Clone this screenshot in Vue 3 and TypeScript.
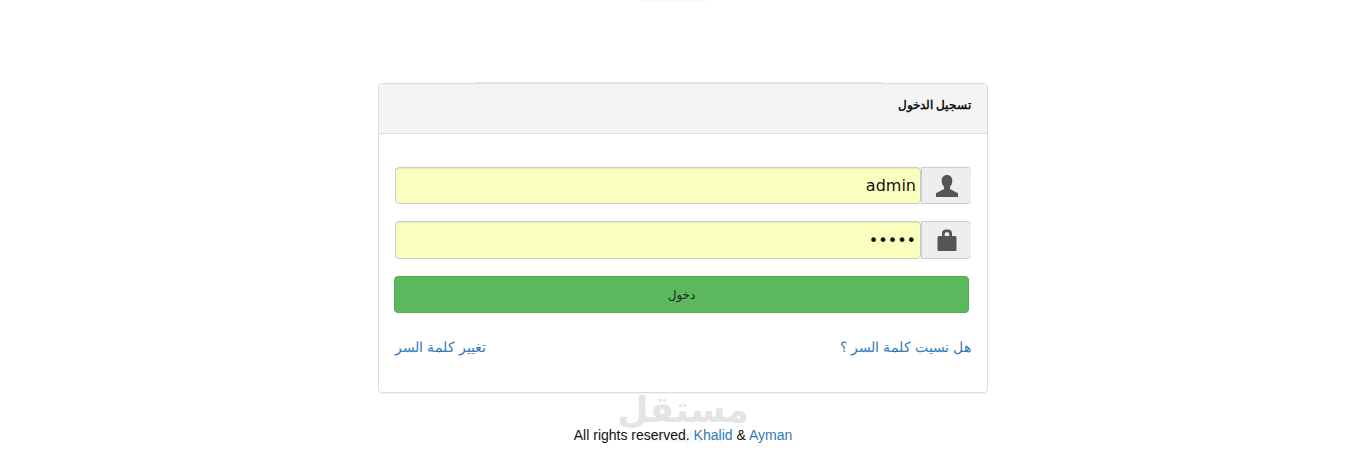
<script setup lang="ts">
import { ref } from 'vue'

const username = ref('admin')
const password = ref('admin')
</script>

<template>
  <div class="page">
    <div class="top-mark"></div>
    <section class="panel">
      <div class="panel-line"></div>
      <header class="panel-heading">تسجيل الدخول</header>
      <div class="panel-body">
        <div class="field">
          <span class="addon">
            <svg width="26" height="24" viewBox="0 0 26 24">
              <path d="M13 1c-3.4 0-5.300 2.500-5.300 5.800 0 2.500.9 4.600 2.300 6v2.300L2 19.300V23h22v-3.700l-8-4.200v-2.300c1.400-1.400 2.300-3.500 2.300-6C18.300 3.500 16.400 1 13 1z" fill="#555"/>
            </svg>
          </span>
          <input v-model="username" class="control" type="text" />
        </div>
        <div class="field field-second">
          <span class="addon">
            <svg width="26" height="24" viewBox="0 0 26 24">
              <path d="M8 8V5.500C8 3 9.500 1.500 12 1.500h2c2.500 0 4 1.500 4 4V8h-2.700V6c0-1-.6-1.700-1.700-1.700h-1.200c-1.100 0-1.700.7-1.700 1.700v2z" fill="#555"/>
              <rect x="3.500" y="8" width="19" height="15" rx="1.500" fill="#555"/>
            </svg>
          </span>
          <input v-model="password" class="control" type="password" />
        </div>
        <button class="submit" type="button">دخول</button>
        <div class="links">
          <a href="#">هل نسيت كلمة السر ؟</a>
          <a href="#">تغيير كلمة السر</a>
        </div>
      </div>
    </section>
    <footer class="footer">
      <div class="watermark" aria-hidden="true">
        <div class="wm-logo">مستقل</div>
        <div class="wm-url">mostaql.com</div>
      </div>
      <span class="footer-text">All rights reserved. <a href="#">Khalid</a> &amp; <a href="#">Ayman</a></span>
    </footer>
  </div>
</template>

<style>
html,
body {
  margin: 0;
  background: #fff;
}
</style>

<style scoped>
.page {
  position: relative;
  height: 456px;
  overflow: hidden;
  padding-top: 83px;
  box-sizing: border-box;
  font-family: "Liberation Sans", Arial, sans-serif;
  font-size: 14px;
  color: #333;
}

.top-mark {
  position: absolute;
  top: 0;
  left: 640px;
  width: 65px;
  height: 2px;
  background: #f8f8f8;
}

.panel {
  position: relative;
  width: 610px;
  height: 310px;
  margin: 0 auto;
  box-sizing: border-box;
  border: 1px solid #ddd;
  border-radius: 4px;
  box-shadow: 0 1px 1px rgba(0, 0, 0, 0.05);
  direction: rtl;
}

.panel-line {
  position: absolute;
  top: -2px;
  left: 95px;
  width: 408px;
  height: 1px;
  background: #e6e6e6;
}

.panel-heading {
  height: 49px;
  line-height: 43px;
  padding: 0 16px;
  background: #f4f4f4;
  border-bottom: 1px solid #ddd;
  border-radius: 3px 3px 0 0;
  font-size: 12px;
  font-weight: bold;
  color: #111;
}

.panel-body {
  padding: 33px 16px 0 15px;
}

.field {
  display: flex;
  height: 37px;
  margin-left: 1px;
}

.field-second {
  height: 38px;
  margin-top: 17px;
}

.addon {
  display: flex;
  align-items: center;
  justify-content: center;
  width: 50px;
  box-sizing: border-box;
  background: #eee;
  border: 1px solid #ccc;
  border-right: 0;
  border-radius: 0 4px 4px 0;
  direction: ltr;
}

.control {
  flex: 1;
  min-width: 0;
  box-sizing: border-box;
  padding: 0 4px;
  background: #faffbd;
  border: 1px solid #ccc;
  border-radius: 4px;
  box-shadow: inset 0 1px 1px rgba(0, 0, 0, 0.075);
  font-family: "DejaVu Sans", sans-serif;
  font-size: 16px;
  color: #111;
  direction: rtl;
  text-align: right;
  outline: none;
}

.submit {
  display: block;
  width: 575px;
  height: 37px;
  margin: 17px 2px 0 0;
  padding: 0;
  background: #5cb85c;
  border: 1px solid #4cae4c;
  border-radius: 4px;
  font-family: "Liberation Sans", "DejaVu Sans", sans-serif;
  font-size: 12px;
  color: #222;
}

.links {
  display: flex;
  justify-content: space-between;
  margin-top: 24px;
  padding-left: 1px;
  font-size: 14px;
  line-height: 20px;
}

a {
  color: #337ab7;
  text-decoration: none;
}

.footer {
  position: relative;
  height: 63px;
  text-align: center;
  font-size: 14px;
  color: #111;
}

.footer-text {
  position: relative;
  display: inline-block;
  margin-top: 32px;
  line-height: 20px;
}

.watermark {
  position: absolute;
  top: -4px;
  left: 0;
  right: 0;
  text-align: center;
  color: #e4e4e4;
  direction: rtl;
}

.wm-logo {
  font-family: "DejaVu Sans", sans-serif;
  font-size: 36px;
  font-weight: bold;
  line-height: 42px;
}

.wm-url {
  margin-top: -3px;
  font-size: 14px;
  line-height: 18px;
  direction: ltr;
  color: #efefef;
}
</style>
